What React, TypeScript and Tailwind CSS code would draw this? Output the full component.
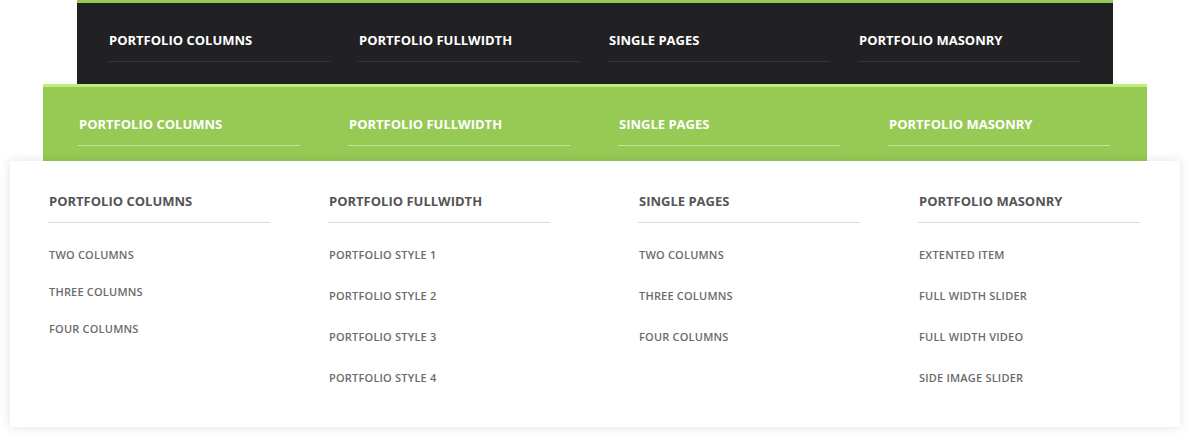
const columns = ['Portfolio Columns', 'Portfolio Fullwidth', 'Single Pages', 'Portfolio Masonry'];

const menu = [
  { title: 'Portfolio Columns', gap: 'gap-[21px]', ml: 'ml-0', items: ['Two Columns', 'Three Columns', 'Four Columns'] },
  { title: 'Portfolio Fullwidth', gap: 'gap-[25px]', ml: 'ml-[58px]', items: ['Portfolio Style 1', 'Portfolio Style 2', 'Portfolio Style 3', 'Portfolio Style 4'] },
  { title: 'Single Pages', gap: 'gap-[25px]', ml: 'ml-[88px]', items: ['Two Columns', 'Three Columns', 'Four Columns'] },
  { title: 'Portfolio Masonry', gap: 'gap-[25px]', ml: 'ml-[58px]', items: ['Extented Item', 'Full Width Slider', 'Full Width Video', 'Side Image Slider'] },
];

export default function App() {
  return (
    <div className="w-[1190px] h-[437px] bg-white flex flex-col items-start" style={{ fontFamily: '"Open Sans", "Liberation Sans", sans-serif' }}>
      {/* dark bar */}
      <div className="ml-[77px] w-[1036px] h-[84px] bg-[#212123] border-t-[3px] border-[#96ca55] pl-[31px] pt-[27px] flex gap-[28px]">
        {columns.map(c => (
          <div key={c} className="w-[222px] h-[32px] pl-px border-b border-[#343437] text-[13px] leading-[20px] font-bold uppercase text-white">
            {c}
          </div>
        ))}
      </div>

      {/* green bar */}
      <div className="ml-[43px] w-[1104px] h-[77px] bg-[#96ca55] border-t-[3px] border-[#b8f07a] pl-[35px] pt-[27px] flex gap-[48px]">
        {columns.map(c => (
          <div key={c} className="w-[222px] h-[32px] pl-px border-b border-[#c3e39b] text-[13px] leading-[20px] font-bold uppercase text-white">
            {c}
          </div>
        ))}
      </div>

      {/* white dropdown */}
      <div className="relative ml-[10px] w-[1170px] h-[266px] bg-white shadow-[0_0_10px_rgba(0,0,0,0.12)] pl-[38px] pt-[30px] flex">
        {menu.map(col => (
          <div key={col.title} className={`w-[222px] ${col.ml} flex flex-col`}>
            <div className="h-[32px] pl-px border-b border-[#dcdcdc] text-[13px] leading-[20px] font-bold uppercase text-[#555555]">
              {col.title}
            </div>
            <ul className={`mt-[24px] pl-px flex flex-col ${col.gap}`}>
              {col.items.map(it => (
                <li key={it} className="text-[11px] leading-[16px] font-semibold tracking-[0.2px] uppercase text-[#6b6b6b]">
                  {it}
                </li>
              ))}
            </ul>
          </div>
        ))}
      </div>
    </div>
  );
}
